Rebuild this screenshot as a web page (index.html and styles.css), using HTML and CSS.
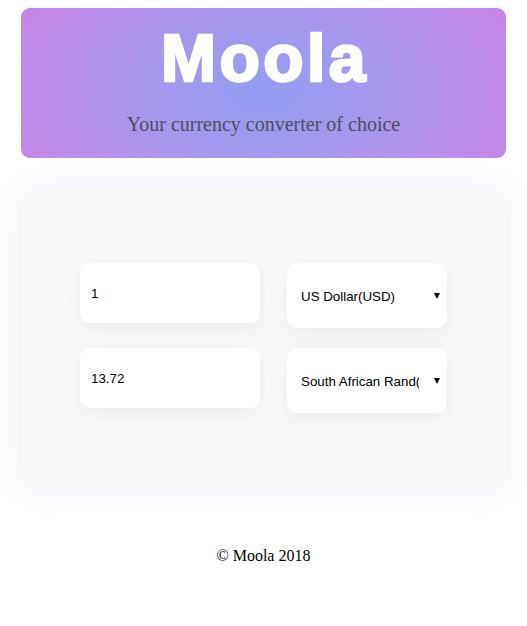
FILE: index.html
```html
<!DOCTYPE html>
<html lang="en">
<head>
<meta charset="utf-8">
<title>Moola</title>
<link rel="stylesheet" href="styles.css">
</head>
<body>
<div class="page">
  <header class="hero">
    <h1 class="hero-title">Moola</h1>
    <p class="hero-sub">Your currency converter of choice</p>
  </header>
  <main class="card">
    <div class="converter">
      <input class="amount" type="text" value="1">
      <div class="select-wrap">
        <select class="currency">
          <option>US Dollar(USD)</option>
        </select>
      </div>
      <input class="amount" type="text" value="13.72">
      <div class="select-wrap">
        <select class="currency">
          <option>South African Rand(ZAR)</option>
        </select>
      </div>
    </div>
  </main>
  <footer class="footer">© Moola 2018</footer>
</div>
</body>
</html>
```

FILE: styles.css
```css
html, body {
  margin: 0;
  padding: 0;
  background: #ffffff;
}

body {
  padding: 8px 21px;
  font-family: "Liberation Serif", "Times New Roman", serif;
}

.page {
  display: flex;
  flex-direction: column;
}

.hero {
  height: 150px;
  box-sizing: border-box;
  border-radius: 9px;
  background: radial-gradient(ellipse 60% 120% at 50% 55%, #939df3 0%, #a996ee 45%, #ca84e6 100%);
  display: flex;
  flex-direction: column;
  align-items: center;
  padding-top: 12px;
}

.hero-title {
  margin: 0;
  font-family: "Liberation Sans", Arial, sans-serif;
  font-weight: 700;
  font-size: 66px;
  line-height: 76px;
  letter-spacing: 3.5px;
  padding-left: 3px;
  color: #ffffff;
  -webkit-text-stroke: 2.6px #ffffff;
}

.hero-sub {
  margin: 17px 0 0;
  font-size: 20px;
  line-height: 23px;
  color: #4f4d5e;
}

.card {
  margin-top: 30px;
  height: 302px;
  box-sizing: border-box;
  padding-top: 75px;
  background: #fafafa;
  border-radius: 24px;
  box-shadow: 0 0 28px rgba(150, 140, 240, 0.16);
  display: flex;
  justify-content: center;
  align-items: flex-start;
}

.converter {
  display: grid;
  grid-template-columns: 180px 160px;
  column-gap: 27px;
  row-gap: 20px;
  align-items: start;
}

.amount {
  height: 60px;
  box-sizing: border-box;
  border: none;
  outline: none;
  border-radius: 10px;
  background: #ffffff;
  padding: 0 11px;
  font-family: "Liberation Sans", Arial, sans-serif;
  font-size: 13.333px;
  color: #000000;
  box-shadow: 0 6px 22px rgba(0, 0, 0, 0.07);
  width: 180px;
}

.select-wrap {
  position: relative;
  height: 65px;
  border-radius: 10px;
  background: #ffffff;
  box-shadow: 0 6px 22px rgba(0, 0, 0, 0.07);
}

.select-wrap::after {
  content: "";
  position: absolute;
  right: 7px;
  top: 30px;
  border-left: 3px solid transparent;
  border-right: 3px solid transparent;
  border-top: 6px solid #000000;
}

.currency {
  -webkit-appearance: none;
  appearance: none;
  width: 160px;
  height: 65px;
  box-sizing: border-box;
  border: none;
  outline: none;
  background: transparent;
  padding: 2px 28px 0 14px;
  font-family: "Liberation Sans", Arial, sans-serif;
  font-size: 13.333px;
  color: #000000;
  border-radius: 10px;
}

.footer {
  margin-top: 57px;
  text-align: center;
  font-size: 16px;
  line-height: 18px;
  color: #000000;
}
```
